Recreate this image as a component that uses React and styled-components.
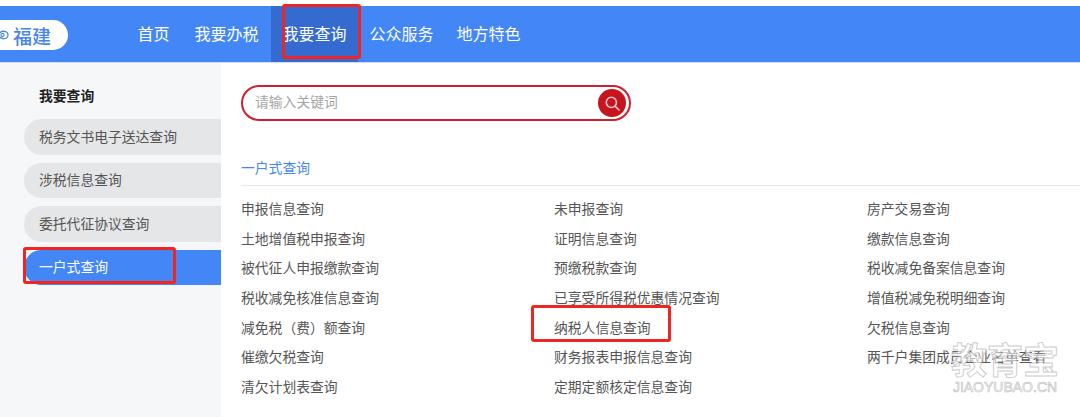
import React from "react"
import styled, {createGlobalStyle} from "styled-components"

const GlobalStyle = createGlobalStyle`
    html, body {
        margin: 0;
        padding: 0;
        background: #fff;
    }
    body {
        width: 1080px;
        height: 417px;
        overflow: hidden;
        font-family: "Liberation Sans", "Noto Sans CJK SC", sans-serif;
    }
`

const navItems = [
    {label: "首页", pad: 12.5},
    {label: "我要办税", pad: 12.5},
    {label: "我要查询", pad: 11.5, active: true},
    {label: "公众服务", pad: 11.5},
    {label: "地方特色", pad: 11.5},
]
const sideItems = ["税务文书电子送达查询", "涉税信息查询", "委托代征协议查询", "一户式查询"]
const columns = [
    ["申报信息查询", "土地增值税申报查询", "被代征人申报缴款查询", "税收减免核准信息查询", "减免税（费）额查询", "催缴欠税查询", "清欠计划表查询"],
    ["未申报查询", "证明信息查询", "预缴税款查询", "已享受所得税优惠情况查询", "纳税人信息查询", "财务报表申报信息查询", "定期定额核定信息查询"],
    ["房产交易查询", "缴款信息查询", "税收减免备案信息查询", "增值税减免税明细查询", "欠税信息查询", "两千户集团成员企业名单查看"],
]

const App = () => {
    return (
        <Page>
            <GlobalStyle />
            <Header>
                <Logo>
                    <svg width="10" height="14" viewBox="0 0 10 14">
                        <path d="M-2 7C0 3.5 3 2.5 6.5 4 8.500 5 8.500 9 6.500 10 3 11.500 0 10.500 -2 7Z" fill="none" stroke="#4a86e8" strokeWidth="1.3" />
                        <circle cx="2.500" cy="7" r="1.600" fill="none" stroke="#4a86e8" strokeWidth="1.100" />
                    </svg>
                    福建
                </Logo>
                <Nav>
                    {navItems.map((item, index) => {
                        return (
                            <NavItem key={index} $active={item.active} $pad={item.pad}>
                                {item.label}
                                {item.active ? <NavMark /> : null}
                            </NavItem>
                        )
                    })}
                </Nav>
            </Header>
            <Body>
                <Sidebar>
                    <SideTitle>我要查询</SideTitle>
                    <SideList>
                        {sideItems.map((item, index) => {
                            return (
                                <SideItem key={index} $active={item === "一户式查询"}>
                                    {item}
                                    {item === "一户式查询" ? <SideMark /> : null}
                                </SideItem>
                            )
                        })}
                    </SideList>
                </Sidebar>
                <Content>
                    <SearchBox>
                        <SearchText>请输入关键词</SearchText>
                        <SearchButton>
                            <svg width="17" height="17" viewBox="0 0 15 15" fill="none" stroke="#f3c4c8" strokeWidth="1.4" strokeLinecap="round">
                                <circle cx="6.500" cy="6.500" r="4.500" />
                                <path d="M10 10l3.200 3.200" />
                            </svg>
                        </SearchButton>
                    </SearchBox>
                    <SectionTitle>一户式查询</SectionTitle>
                    <Grid>
                        {columns.map((col, colIndex) => {
                            return (
                                <Column key={colIndex}>
                                    {col.map((link, index) => {
                                        return (
                                            <LinkItem key={index}>
                                                {link}
                                                {link === "纳税人信息查询" ? <LinkMark /> : null}
                                            </LinkItem>
                                        )
                                    })}
                                </Column>
                            )
                        })}
                    </Grid>
                    <Watermark>
                        <WatermarkName>教育宝</WatermarkName>
                        <WatermarkUrl>JIAOYUBAO.CN</WatermarkUrl>
                    </Watermark>
                </Content>
            </Body>
        </Page>
    )
}

const Page = styled.div`
    width: 1080px;
    height: 417px;
    padding-top: 6px;
    box-sizing: border-box;
    display: flex;
    flex-direction: column;
    background: #fff;
    overflow: hidden;
`

const Header = styled.header`
    height: 57px;
    box-sizing: border-box;
    background: #4287f5;
    display: flex;
    align-items: center;
    flex-shrink: 0;
    border-bottom: 1px solid #cfe0fb;
`

const Logo = styled.div`
    width: 68px;
    height: 30px;
    margin-top: 2px;
    background: #fff;
    border-radius: 0 15px 15px 0;
    display: flex;
    align-items: center;
    gap: 3px;
    box-sizing: border-box;
    font-size: 19px;
    font-weight: 500;
    color: #4a86e8;
    svg {
        flex-shrink: 0;
    }
`

const Nav = styled.nav`
    display: flex;
    height: 100%;
    margin-left: 57px;
`

const NavItem = styled.div`
    position: relative;
    height: 100%;
    box-sizing: border-box;
    display: flex;
    align-items: center;
    padding: 0 ${(props) => props.$pad}px 2px;
    font-size: 16px;
    color: #fff;
    background: ${(props) => (props.$active ? "#356bd0" : "transparent")};
`

const NavMark = styled.span`
    position: absolute;
    left: 11px;
    top: -2px;
    width: 79px;
    height: 55px;
    box-sizing: border-box;
    border: 3px solid #f02420;
    border-radius: 3px;
`

const Body = styled.div`
    flex: 1;
    display: flex;
    min-height: 0;
`

const Sidebar = styled.aside`
    width: 221px;
    flex-shrink: 0;
    padding-top: 25px;
    box-sizing: border-box;
    background: #f6f7f9;
`

const SideTitle = styled.div`
    padding-left: 39px;
    font-size: 13.8px;
    font-weight: 700;
    line-height: 18px;
    color: #222;
`

const SideList = styled.div`
    margin-top: 13px;
    padding-left: 24px;
    display: flex;
    flex-direction: column;
    gap: 8px;
`

const SideItem = styled.div`
    position: relative;
    height: 35.5px;
    padding: 0 0 2px 15px;
    box-sizing: border-box;
    display: flex;
    align-items: center;
    font-size: 13.8px;
    border-radius: 18px 0 0 18px;
    color: ${(props) => (props.$active ? "#fff" : "#555")};
    background: ${(props) => (props.$active ? "#4287f5" : "#e5e6e8")};
`

const SideMark = styled.span`
    position: absolute;
    left: -1px;
    top: -3px;
    width: 153px;
    height: 37px;
    box-sizing: border-box;
    border: 3px solid #f02420;
    border-radius: 3px;
`

const Content = styled.main`
    position: relative;
    flex: 1;
    min-width: 0;
    padding: 22px 0 0 20px;
`

const SearchBox = styled.div`
    width: 390px;
    height: 36px;
    box-sizing: border-box;
    border: 2px solid #cf2030;
    border-radius: 18px;
    display: flex;
    align-items: center;
    justify-content: space-between;
    padding: 0 3px 0 12px;
`

const SearchText = styled.span`
    font-size: 13.8px;
    line-height: 18px;
    color: #a5a5a5;
`

const SearchButton = styled.div`
    width: 28px;
    height: 28px;
    border-radius: 50%;
    background: #c8141f;
    display: flex;
    align-items: center;
    justify-content: center;
`

const SectionTitle = styled.div`
    margin-top: 39px;
    padding-bottom: 7px;
    font-size: 13.8px;
    line-height: 18px;
    color: #4287f5;
    border-bottom: 1px solid #e8e8e8;
`

const Grid = styled.div`
    display: grid;
    grid-template-columns: 313px 313px 1fr;
    margin-top: 9px;
`

const Column = styled.div`
    display: flex;
    flex-direction: column;
`

const LinkItem = styled.div`
    position: relative;
    height: 29.7px;
    line-height: 30px;
    font-size: 13.8px;
    color: #555;
    white-space: nowrap;
`

const LinkMark = styled.span`
    position: absolute;
    left: -23px;
    top: -9px;
    width: 140px;
    height: 37px;
    box-sizing: border-box;
    border: 3px solid #f02420;
    border-radius: 3px;
`

const Watermark = styled.div`
    position: absolute;
    right: 20px;
    bottom: 22px;
    width: 110px;
    display: flex;
    flex-direction: column;
    align-items: center;
`

const WatermarkName = styled.span`
    font-size: 36px;
    line-height: 36px;
    font-weight: 700;
    color: rgba(255, 255, 255, 0.6);
    -webkit-text-stroke: 1px rgba(170, 170, 170, 0.6);
`

const WatermarkUrl = styled.span`
    font-size: 14px;
    line-height: 15px;
    color: rgba(255, 255, 255, 0.6);
    -webkit-text-stroke: 0.6px rgba(170, 170, 170, 0.8);
`

export default App
